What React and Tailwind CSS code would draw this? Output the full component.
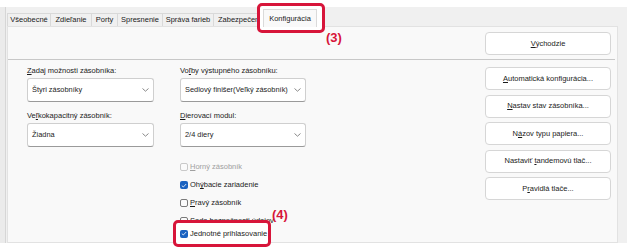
import React from "react";

const U = ({ children }) => <span className="underline underline-offset-[1px]">{children}</span>;

function Chevron() {
  return (
    <svg width="7" height="4" viewBox="0 0 7 4" className="shrink-0">
      <path d="M0.5 0.5 L3.5 3.2 L6.5 0.5" fill="none" stroke="#6b6b6b" strokeWidth="0.8" />
    </svg>
  );
}

function Select({ children }) {
  return (
    <div className="h-[24px] bg-white border border-[#cfcfcf] border-b-[#9a9a9a] rounded-[3px] flex items-center justify-between pl-[4px] pr-[4px] text-[7.4px]">
      <span className="whitespace-nowrap">{children}</span>
      <Chevron />
    </div>
  );
}

function CheckedBox() {
  return (
    <div className="w-[8px] h-[8px] rounded-[2px] bg-[#1a62c0] flex items-center justify-center shrink-0">
      <svg width="6" height="5" viewBox="0 0 6 5">
        <path d="M0.8 2.6 L2.3 4 L5.2 1" fill="none" stroke="white" strokeWidth="0.8" />
      </svg>
    </div>
  );
}

function Check({ checked, disabled, children }) {
  return (
    <div className="h-[18px] flex items-center gap-[2px]">
      {checked ? (
        <CheckedBox />
      ) : (
        <div className={"w-[8px] h-[8px] rounded-[2px] border bg-[#fbfbfb] shrink-0 " + (disabled ? "border-[#c9c9c9]" : "border-[#7a7a7a]")} />
      )}
      <span className={"whitespace-nowrap " + (disabled ? "text-[#a0a0a0]" : "text-[#1b1b1b]")}>{children}</span>
    </div>
  );
}

function Btn({ children }) {
  return (
    <div className="h-[23px] w-[126px] bg-white border border-[#d6d6d6] rounded-[4px] flex items-center justify-center text-[7.5px]">
      {children}
    </div>
  );
}

function Tab({ children, w }) {
  return (
    <div className={"h-[13px] border border-[#d9d9d9] border-b-0 -ml-px first:ml-0 flex items-center justify-center bg-[#f0f0f0] text-[7.5px] " + w}>
      {children}
    </div>
  );
}

export default function App() {
  return (
    <div className="relative w-[627px] h-[250px] bg-white overflow-hidden font-['Liberation_Sans',Arial,sans-serif] text-[7.5px] text-[#1b1b1b] leading-none">
      <div className="mt-[7px] h-[236px] bg-[#ebebeb] flex">
        <div className="ml-[5px] flex-1 bg-[#f0f0f0] border-l border-[#d6d6d6] flex flex-col">
          <div className="ml-[1px] mt-[6px] h-[13px] flex">
            <Tab w="w-[44px]">Všeobecné</Tab>
            <Tab w="w-[42px]">Zdieľanie</Tab>
            <Tab w="w-[27px]">Porty</Tab>
            <Tab w="w-[46px]">Spresnenie</Tab>
            <Tab w="w-[52px]">Správa farieb</Tab>
            <Tab w="w-[56px] justify-start pl-[4px]">Zabezpečenie</Tab>
          </div>
          <div className="flex-1 ml-[1px] mr-[9px] bg-[#f9f9f9] border border-[#e2e2e2] flex flex-col overflow-hidden">
            <div className="pt-[5px] pr-[6px] flex justify-end">
              <Btn><span><U>V</U>ýchodzie</span></Btn>
            </div>
            <div className="mt-[4px] mr-[2px] h-px bg-[#c8c8c8]" />
            <div className="flex justify-between pr-[6px]">
              <div className="pl-[19px] pt-[6px] flex gap-[26px]">
                <div className="w-[127px] flex flex-col">
                  <div className="h-[10px] leading-[10px] mb-[2px]"><U>Z</U>adaj možnosti zásobníka:</div>
                  <Select>Štyri zásobníky</Select>
                  <div className="h-[10px] leading-[10px] mt-[9px] mb-[2px]">Ve<U>ľ</U>kokapacitný zásobník:</div>
                  <Select>Žiadna</Select>
                </div>
                <div className="w-[126px] flex flex-col">
                  <div className="h-[10px] leading-[10px] mb-[2px]">Vo<U>ľ</U>by výstupného zásobníku:</div>
                  <Select>Sedlový finišer(Veľký zásobník)</Select>
                  <div className="h-[10px] leading-[10px] mt-[9px] mb-[2px]"><U>D</U>ierovací modul:</div>
                  <Select>2/4 diery</Select>
                  <div className="mt-[11px] flex flex-col">
                    <Check disabled><U>H</U>orný zásobník</Check>
                    <Check checked>Oh<U>ý</U>bacie zariadenie</Check>
                    <Check><U>P</U>ravý zásobník</Check>
                    <Check>Sada bezpečnosti údajov</Check>
                  </div>
                </div>
              </div>
              <div className="pt-[7px] flex flex-col gap-[4.5px]">
                <Btn><span><U>A</U>utomatická konfigurácia...</span></Btn>
                <Btn><span><U>N</U>astav stav zásobníka...</span></Btn>
                <Btn><span>N<U>á</U>zov typu papiera...</span></Btn>
                <Btn><span>Nastaviť <U>t</U>andemovú tlač...</span></Btn>
                <Btn><span>P<U>r</U>avidlá tlače...</span></Btn>
              </div>
            </div>
          </div>
        </div>
      </div>

      {/* annotation (3) */}
      <div className="absolute left-[257px] top-[3px] w-[68px] h-[30px] border-[3px] border-[#d7153a] rounded-[5px] bg-white">
        <div className="ml-[3px] mt-[3px] w-[54px] h-[18px] bg-[#f9f9f9] border border-[#dadada] border-b-0 flex items-center justify-center text-[7.5px]">
          Konfigurácia
        </div>
      </div>
      <div className="absolute left-[326px] top-[31px] text-[13px] font-bold text-[#d7153a] leading-none">(3)</div>

      {/* annotation (4) */}
      <div className="absolute left-[173px] top-[220px] w-[98px] h-[27px] border-[3px] border-[#d7153a] rounded-[5px] bg-white pl-[4px] flex items-center">
        <div className="flex items-center gap-[2px]">
          <CheckedBox />
          <span className="whitespace-nowrap">Jednotné prihlasovanie</span>
        </div>
      </div>
      <div className="absolute left-[272px] top-[208px] text-[13px] font-bold text-[#d7153a] leading-none">(4)</div>
    </div>
  );
}
